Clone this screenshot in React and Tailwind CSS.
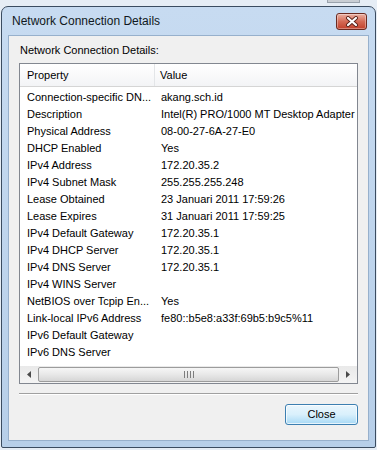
import React from 'react'

const rows = [
  ['Connection-specific DN...', 'akang.sch.id'],
  ['Description', 'Intel(R) PRO/1000 MT Desktop Adapter'],
  ['Physical Address', '08-00-27-6A-27-E0'],
  ['DHCP Enabled', 'Yes'],
  ['IPv4 Address', '172.20.35.2'],
  ['IPv4 Subnet Mask', '255.255.255.248'],
  ['Lease Obtained', '23 Januari 2011 17:59:26'],
  ['Lease Expires', '31 Januari 2011 17:59:25'],
  ['IPv4 Default Gateway', '172.20.35.1'],
  ['IPv4 DHCP Server', '172.20.35.1'],
  ['IPv4 DNS Server', '172.20.35.1'],
  ['IPv4 WINS Server', ''],
  ['NetBIOS over Tcpip En...', 'Yes'],
  ['Link-local IPv6 Address', 'fe80::b5e8:a33f:69b5:b9c5%11'],
  ['IPv6 Default Gateway', ''],
  ['IPv6 DNS Server', ''],
]

function CloseX() {
  return (
    <div className="w-[31px] h-[17px] rounded-[3px] border border-[#6b2a20] bg-gradient-to-b from-[#eab1a4] via-[#d46a55] to-[#c2402a] flex items-center justify-center shadow-[inset_0_0_0_1px_rgba(255,255,255,0.35)]">
      <svg width="14" height="11" viewBox="0 0 14 11">
        <path d="M3 2 L11 9 M11 2 L3 9" stroke="#5a2219" strokeWidth="4" strokeLinecap="round" />
        <path d="M3 2 L11 9 M11 2 L3 9" stroke="#ffffff" strokeWidth="2.2" strokeLinecap="round" />
      </svg>
    </div>
  )
}

function Arrow({ dir }) {
  return (
    <div className="w-[18px] h-full flex items-center justify-center">
      <svg width="4" height="7" viewBox="0 0 4 7">
        {dir === 'left' ? <path d="M4 0 L0 3.5 L4 7 Z" fill="#4a4a4a" /> : <path d="M0 0 L4 3.5 L0 7 Z" fill="#4a4a4a" />}
      </svg>
    </div>
  )
}

export default function App() {
  return (
    <div
      className="w-[377px] h-[450px] bg-[#e6edf5] overflow-hidden text-[11px] text-black"
      style={{ fontFamily: '"Liberation Sans", Arial, sans-serif' }}
    >
      <div className="h-[6px] flex justify-end pr-[17px]">
        <div className="w-[33px] h-[3px] bg-[#c9ced4] border-x border-b border-[#9aa3ad]" />
      </div>
      <div className="ml-[1px] w-[375px] h-[442px] border border-[#3b4c60] rounded-t-[7px] rounded-b-[2px] bg-gradient-to-b from-[#c7dbf1] to-[#b7cfe9] flex flex-col">
        <div className="h-[28px] flex items-start justify-between pl-[10px] pr-[8px]">
          <span className="mt-[8px] text-[12px] leading-[12px] text-[#101820]">Network Connection Details</span>
          <div className="mt-[6px]">
            <CloseX />
          </div>
        </div>
        <div className="mx-[6px] h-[406px] border border-[#97b0cc] bg-[#f0f0f0] flex flex-col px-[10px]">
          <div className="mt-[6px] h-[16px] leading-[16px] pl-[1px]">Network Connection Details:</div>
          <div className="mt-[5px] h-[321px] border border-[#828790] bg-white flex flex-col">
            <div className="h-[23px] flex items-center border-b border-[#d5d5d5] bg-gradient-to-b from-white to-[#f3f4f6]">
              <div className="w-[135px] h-full pl-[7px] flex items-center border-r border-[#e3e5e8]">Property</div>
              <div className="pl-[5px]">Value</div>
            </div>
            <div className="mt-[2px] flex flex-col">
              {rows.map(([k, v], i) => (
                <div key={i} className="h-[17px] flex items-center whitespace-nowrap">
                  <div className="w-[141px] pl-[7px]">{k}</div>
                  <div>{v}</div>
                </div>
              ))}
            </div>
            <div className="flex-1" />
            <div className="h-[17px] flex items-stretch bg-gradient-to-b from-[#e9e9e9] to-[#f4f4f4]">
              <Arrow dir="left" />
              <div className="flex-1 my-[1px] rounded-[2px] border border-[#9c9c9c] bg-gradient-to-b from-[#f6f6f6] via-[#e8e8e8] to-[#d6d6d6] flex items-center justify-center">
                <div className="flex gap-[2px]">
                  <div className="w-[1px] h-[7px] bg-[#7d7d7d]" />
                  <div className="w-[1px] h-[7px] bg-[#7d7d7d]" />
                  <div className="w-[1px] h-[7px] bg-[#7d7d7d]" />
                  <div className="w-[1px] h-[7px] bg-[#7d7d7d]" />
                </div>
              </div>
              <Arrow dir="right" />
            </div>
          </div>
          <div className="mt-[9px] border-t border-[#a0a0a0] border-b border-b-white" />
          <div className="mt-[9px] flex justify-end">
            <button className="w-[73px] h-[21px] rounded-[3px] border border-[#3c7fb1] bg-gradient-to-b from-[#eaf6fd] via-[#d9f0fc] to-[#a7d9f5] shadow-[inset_0_0_0_1px_rgba(255,255,255,0.7)] text-[11px] leading-[19px] text-black">
              Close
            </button>
          </div>
        </div>
      </div>
    </div>
  )
}
